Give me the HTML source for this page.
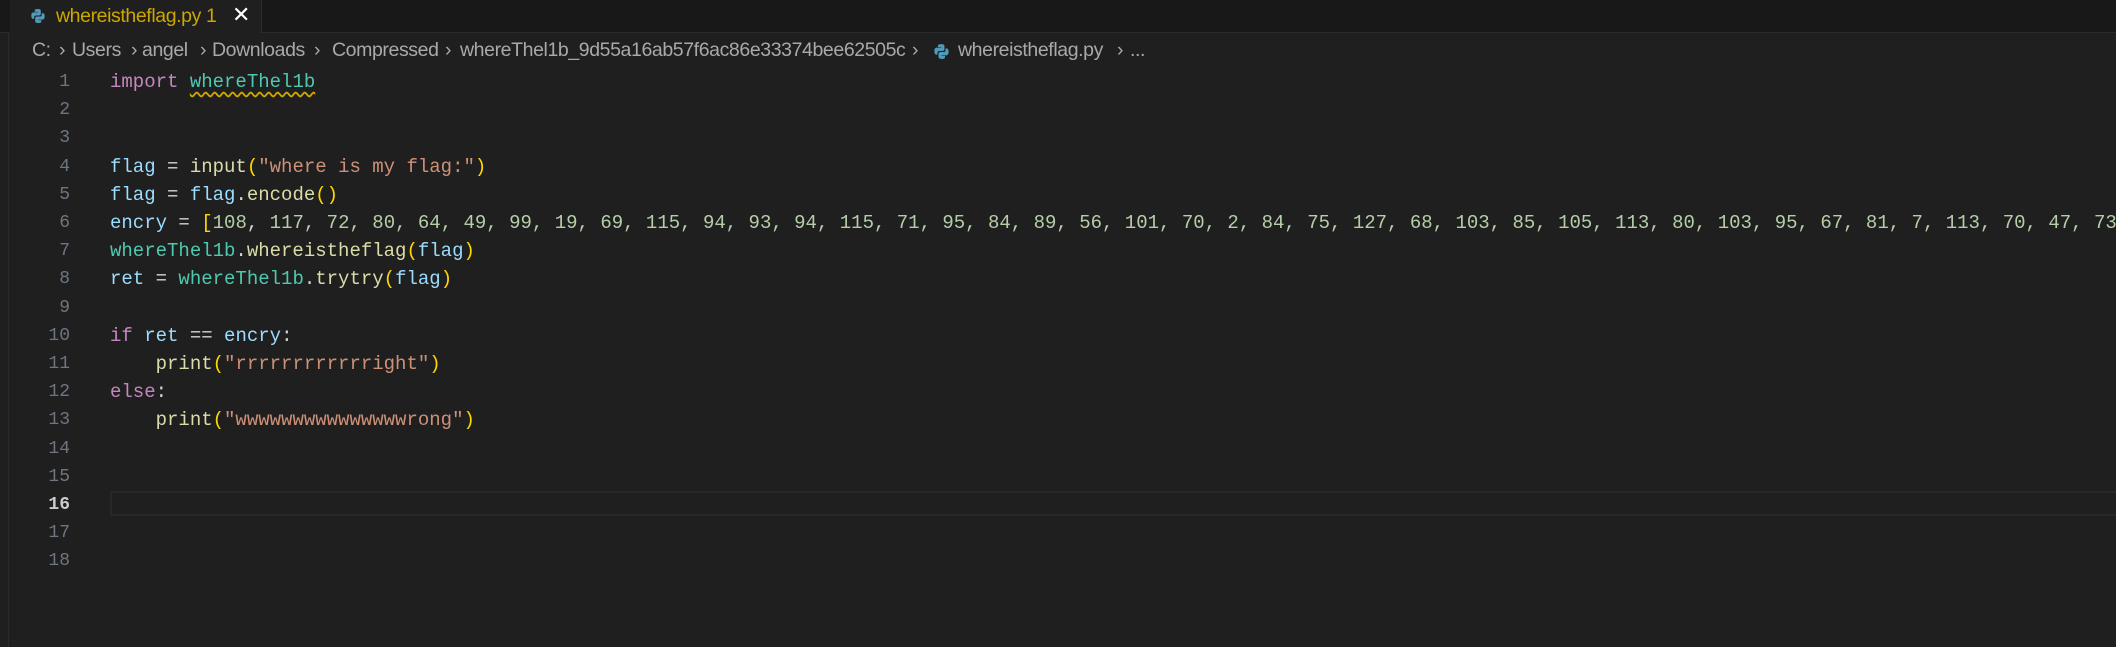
<!DOCTYPE html>
<html><head><meta charset="utf-8"><style>
body{margin:0;width:2116px;height:647px;background:#1f1f1f;overflow:hidden;position:relative;font-family:"Liberation Sans",sans-serif}
.tabs{position:absolute;left:0;top:0;width:2116px;height:33px;background:#181818;border-bottom:1px solid #2b2b2b;box-sizing:border-box}
.tab{position:absolute;left:10px;top:0;width:251px;height:33px;background:#1f1f1f;border-right:1px solid #2b2b2b}
.tab .t{position:absolute;left:46px;top:5px;color:#cca700;font-size:19.5px;letter-spacing:-0.4px}
.tab .x{position:absolute;left:222px;top:2px;color:#fff;font-size:22px}
.bc span{position:absolute;top:39px;color:#a9a9a9;font-size:19.5px;white-space:pre;letter-spacing:-0.4px}
.left{position:absolute;left:8px;top:33px;width:1px;height:614px;background:#2b2b2b}
.ln{position:absolute;left:20px;width:50px;text-align:right;color:#6e7681;font-family:"Liberation Mono",monospace;font-size:18px;line-height:28.2px;top:68px}
.code{position:absolute;left:110px;top:68px;font-family:"Liberation Mono",monospace;font-size:19px;line-height:28.2px;color:#9cdcfe;white-space:pre}
.cur{position:absolute;left:110px;top:491px;width:2010px;height:25px;border:2px solid #282828;box-sizing:border-box}
.k{color:#c586c0}.m{color:#4ec9b0}.s{color:#ce9178}.n{color:#b5cea8}.f{color:#dcdcaa}.p{color:#ffd700}.w{color:#d4d4d4}
.sq{text-decoration:underline wavy #cca700;text-underline-offset:4px}
</style></head><body>
<div class="tabs"><div class="tab">
<svg style="position:absolute;left:20px;top:8px" width="16" height="16" viewBox="0 0 16 16"><path d="M7.8 1C4.5 1 4.7 2.4 4.7 2.4v1.5h3.2v.5H3.4S1.3 4.2 1.3 7.6s1.8 3.3 1.8 3.3h1.1V9.3s-.1-1.8 1.8-1.8h3.1s1.7 0 1.7-1.7V2.8S11.1 1 7.8 1z" fill="#519aba"/><path d="M8.2 15c3.3 0 3.1-1.4 3.1-1.4v-1.5H8.1v-.5h4.5s2.1.2 2.1-3.2-1.8-3.3-1.8-3.3h-1.1v1.6s.1 1.8-1.8 1.8H6.9s-1.7 0-1.7 1.7v2.9S4.9 15 8.2 15z" fill="#519aba"/></svg>
<span class="t">whereistheflag.py 1</span><span class="x">✕</span></div></div>
<div class="bc">
<span style="left:32px">C:</span><span style="left:59px">›</span>
<span style="left:72px">Users</span><span style="left:131px">›</span>
<span style="left:142px">angel</span><span style="left:200px">›</span>
<span style="left:212px">Downloads</span><span style="left:314px">›</span>
<span style="left:332px">Compressed</span><span style="left:445px">›</span>
<span style="left:460px">whereThel1b_9d55a16ab57f6ac86e33374bee62505c</span><span style="left:912px">›</span>
<span style="left:958px">whereistheflag.py</span><span style="left:1117px">›</span>
<span style="left:1130px">...</span>
</div>
<svg style="position:absolute;left:933px;top:43px" width="17" height="17" viewBox="0 0 16 16"><path d="M7.8 1C4.5 1 4.7 2.4 4.7 2.4v1.5h3.2v.5H3.4S1.3 4.2 1.3 7.6s1.8 3.3 1.8 3.3h1.1V9.3s-.1-1.8 1.8-1.8h3.1s1.7 0 1.7-1.7V2.8S11.1 1 7.8 1z" fill="#519aba"/><path d="M8.2 15c3.3 0 3.1-1.4 3.1-1.4v-1.5H8.1v-.5h4.5s2.1.2 2.1-3.2-1.8-3.3-1.8-3.3h-1.1v1.6s.1 1.8-1.8 1.8H6.9s-1.7 0-1.7 1.7v2.9S4.9 15 8.2 15z" fill="#519aba"/></svg>
<div class="left"></div>
<div class="cur"></div>
<div class="ln">1<br>2<br>3<br>4<br>5<br>6<br>7<br>8<br>9<br>10<br>11<br>12<br>13<br>14<br>15<br><span style="color:#ccc;font-weight:bold">16</span><br>17<br>18</div>
<div class="code"><span class="k">import</span> <span class="m sq">whereThel1b</span>


flag <span class="w">=</span> <span class="f">input</span><span class="p">(</span><span class="s">"where is my flag:"</span><span class="p">)</span>
flag <span class="w">=</span> flag<span class="w">.</span><span class="f">encode</span><span class="p">()</span>
encry <span class="w">=</span> <span class="p">[</span><span class="n">108</span><span class="w">, </span><span class="n">117, 72, 80, 64, 49, 99, 19, 69, 115, 94, 93, 94, 115, 71, 95, 84, 89, 56, 101, 70, 2, 84, 75, 127, 68, 103, 85, 105, 113, 80, 103, 95, 67, 81, 7, 113, 70, 47, 73</span>
<span class="m">whereThel1b</span><span class="w">.</span><span class="f">whereistheflag</span><span class="p">(</span>flag<span class="p">)</span>
ret <span class="w">=</span> <span class="m">whereThel1b</span><span class="w">.</span><span class="f">trytry</span><span class="p">(</span>flag<span class="p">)</span>

<span class="k">if</span> ret <span class="w">==</span> encry<span class="w">:</span>
    <span class="f">print</span><span class="p">(</span><span class="s">"rrrrrrrrrrrright"</span><span class="p">)</span>
<span class="k">else</span><span class="w">:</span>
    <span class="f">print</span><span class="p">(</span><span class="s">"wwwwwwwwwwwwwwwrong"</span><span class="p">)</span>
</div>
</body></html>
